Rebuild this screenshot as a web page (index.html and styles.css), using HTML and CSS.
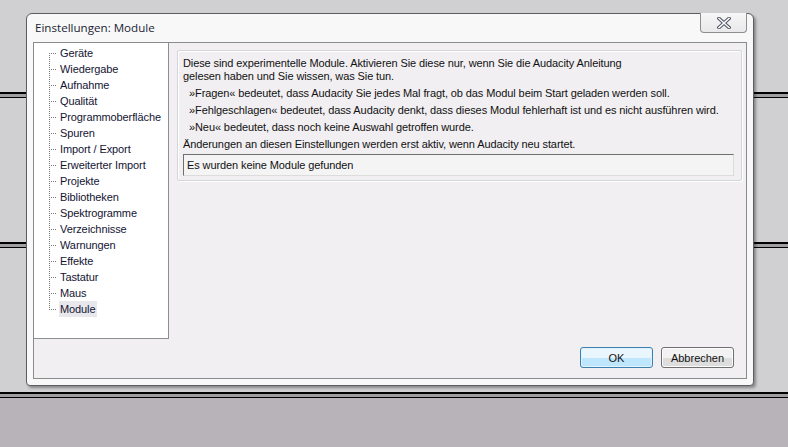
FILE: index.html
```html
<!DOCTYPE html>
<html lang="de">
<head>
<meta charset="utf-8">
<title>Einstellungen: Module</title>
<link rel="stylesheet" href="styles.css">
</head>
<body>
<div class="desktop">
  <div class="gap gap-top"></div>
  <div class="bar"></div>
  <div class="gap gap-mid"></div>
  <div class="bar"></div>
  <div class="gap gap-mid"></div>
  <div class="bar"></div>
  <div class="lower"></div>

  <section class="dialog">
    <header class="titlebar">
      <h1 class="title">Einstellungen: Module</h1>
      <button class="close" aria-label="Schließen">
        <svg width="14" height="12" viewBox="0 0 14 12">
          <path d="M2 1.5 L12 10.5 M12 1.5 L2 10.5" stroke="#4a4f5a" stroke-width="3.6" stroke-linecap="square" fill="none"/>
          <path d="M2 1.5 L12 10.5 M12 1.5 L2 10.5" stroke="#f4f6fa" stroke-width="1.6" stroke-linecap="square" fill="none"/>
        </svg>
      </button>
    </header>
    <div class="panel">
      <nav class="tree">
        <ul class="tree-list">
          <li class="tree-item first"><span class="label">Geräte</span></li>
          <li class="tree-item"><span class="label">Wiedergabe</span></li>
          <li class="tree-item"><span class="label">Aufnahme</span></li>
          <li class="tree-item"><span class="label">Qualität</span></li>
          <li class="tree-item"><span class="label">Programmoberfläche</span></li>
          <li class="tree-item"><span class="label">Spuren</span></li>
          <li class="tree-item"><span class="label">Import / Export</span></li>
          <li class="tree-item"><span class="label">Erweiterter Import</span></li>
          <li class="tree-item"><span class="label">Projekte</span></li>
          <li class="tree-item"><span class="label">Bibliotheken</span></li>
          <li class="tree-item"><span class="label">Spektrogramme</span></li>
          <li class="tree-item"><span class="label">Verzeichnisse</span></li>
          <li class="tree-item"><span class="label">Warnungen</span></li>
          <li class="tree-item"><span class="label">Effekte</span></li>
          <li class="tree-item"><span class="label">Tastatur</span></li>
          <li class="tree-item"><span class="label">Maus</span></li>
          <li class="tree-item last selected"><span class="label">Module</span></li>
        </ul>
      </nav>
      <div class="main">
        <div class="group">
          <p class="intro">Diese sind experimentelle Module. Aktivieren Sie diese nur, wenn Sie die Audacity Anleitung<br>gelesen haben und Sie wissen, was Sie tun.</p>
          <p class="line bullet">»Fragen« bedeutet, dass Audacity Sie jedes Mal fragt, ob das Modul beim Start geladen werden soll.</p>
          <p class="line bullet">»Fehlgeschlagen« bedeutet, dass Audacity denkt, dass dieses Modul fehlerhaft ist und es nicht ausführen wird.</p>
          <p class="line bullet">»Neu« bedeutet, dass noch keine Auswahl getroffen wurde.</p>
          <p class="line">Änderungen an diesen Einstellungen werden erst aktiv, wenn Audacity neu startet.</p>
          <div class="field">Es wurden keine Module gefunden</div>
        </div>
        <div class="buttons">
          <button class="btn btn-default">OK</button>
          <button class="btn">Abbrechen</button>
        </div>
      </div>
    </div>
  </section>
</div>
</body>
</html>
```

FILE: styles.css
```css
* { box-sizing: border-box; }

html, body {
  margin: 0;
  padding: 0;
}

body {
  width: 788px;
  height: 447px;
  overflow: hidden;
  font-family: "Liberation Sans", Arial, sans-serif;
  font-size: 11px;
  color: #111;
}

.desktop {
  position: relative;
  width: 788px;
  height: 447px;
  background: #d0cfd1;
  display: flex;
  flex-direction: column;
}

.gap-top { height: 92px; }
.gap-mid { height: 144px; }

.bar {
  height: 6px;
  border-top: 2px solid #000;
  border-bottom: 1px solid #000;
  background: #a09ea1;
}

.lower {
  flex: 1;
  background: #b7b3b8;
}

/* dialog window on the desktop */
.dialog {
  position: absolute;
  left: 26px;
  top: 13px;
  width: 728px;
  height: 373px;
  border: 1px solid #5c5e62;
  border-radius: 6px 6px 4px 4px;
  background: #f8f8f9;
  box-shadow: 2px 2px 3px rgba(0, 0, 0, 0.35);
  padding: 0 6px 6px 6px;
  display: flex;
  flex-direction: column;
}

.titlebar {
  height: 28px;
  display: flex;
  align-items: flex-start;
  justify-content: space-between;
}

.title {
  margin: 0;
  padding: 6px 0 0 2px;
  font-family: "Open Sans", "Liberation Sans", sans-serif;
  font-weight: normal;
  font-size: 11.6px;
  line-height: 16px;
  color: #1b2432;
}

.close {
  margin: -1px 0 0 0;
  width: 47px;
  height: 20px;
  padding: 0;
  border: 1px solid #8c8e92;
  border-top: none;
  border-radius: 0 0 4px 4px;
  background: linear-gradient(#f6f6f7, #e9e9eb);
  display: flex;
  align-items: center;
  justify-content: center;
}

.close svg { display: block; margin-top: 1px; }

.panel {
  flex: 1;
  border: 1px solid #8a8b8d;
  background: #f1eff1;
  display: grid;
  grid-template-columns: 135px 1fr;
}

/* tree */
.tree {
  height: 296px;
  background: #fff;
  border-right: 1px solid #8d8e90;
  border-bottom: 1px solid #8d8e90;
  padding: 2px 0 0 15px;
  letter-spacing: -0.1px;
}

.tree-list {
  margin: 0;
  padding: 0;
  list-style: none;
}

.tree-item {
  display: flex;
  height: 16px;
  align-items: stretch;
  color: #141433;
}

.tree-item::before {
  content: "";
  width: 10px;
  flex: none;
  background:
    repeating-linear-gradient(to bottom, #7a7a7a 0 1px, transparent 1px 2px) left top / 1px 100% no-repeat,
    repeating-linear-gradient(to right, #7a7a7a 0 1px, transparent 1px 2px) left 8px / 8px 1px no-repeat;
}

.tree-item.first::before {
  background:
    repeating-linear-gradient(to bottom, #7a7a7a 0 1px, transparent 1px 2px) left bottom / 1px 8px no-repeat,
    repeating-linear-gradient(to right, #7a7a7a 0 1px, transparent 1px 2px) left 8px / 8px 1px no-repeat;
}

.tree-item.last::before {
  background:
    repeating-linear-gradient(to bottom, #7a7a7a 0 1px, transparent 1px 2px) left top / 1px 8px no-repeat,
    repeating-linear-gradient(to right, #7a7a7a 0 1px, transparent 1px 2px) left 8px / 8px 1px no-repeat;
}

.label {
  line-height: 16px;
  padding: 0 2px 0 1px;
  white-space: nowrap;
}

.tree-item.selected .label {
  background: #e8e8ec;
}

/* right side */
.main {
  display: flex;
  flex-direction: column;
  justify-content: space-between;
  padding: 7px 4px 10px 8px;
}

.group {
  border: 1px solid #d3d6d9;
  border-radius: 2px;
  box-shadow: inset 1px 1px 0 #fff, 1px 1px 0 #fff;
  padding: 6px 7px 4px 5px;
  letter-spacing: -0.1px;
}

.group p { margin: 0; white-space: nowrap; }

.intro {
  line-height: 13px;
}

.line {
  line-height: 17px;
}

.intro + .line { margin-top: 2px; }

.bullet { padding-left: 6px; }

.field {
  margin-top: 1px;
  height: 22px;
  line-height: 20px;
  padding-left: 3px;
  border-top: 1px solid #6e6e6e;
  border-left: 1px solid #6e6e6e;
  border-right: 1px solid #dcdcdc;
  border-bottom: 1px solid #dcdcdc;
  background: #f5f4f5;
}

.buttons {
  display: flex;
  justify-content: flex-end;
  gap: 8px;
  padding-right: 8px;
}

.btn {
  width: 73px;
  height: 21px;
  padding: 0;
  font-family: "Liberation Sans", Arial, sans-serif;
  font-size: 11px;
  color: #111;
  border: 1px solid #707070;
  border-radius: 3px;
  background: linear-gradient(#f2f2f2 0 50%, #dddddd 50% 100%);
  box-shadow: inset 0 0 0 1px #fcfcfc;
}

.btn-default {
  border-color: #3c7fb1;
  background: linear-gradient(#eaf6fd 0 50%, #bee6fd 50% 100%);
  box-shadow: inset 0 0 0 1px #dff2fd;
}
```
